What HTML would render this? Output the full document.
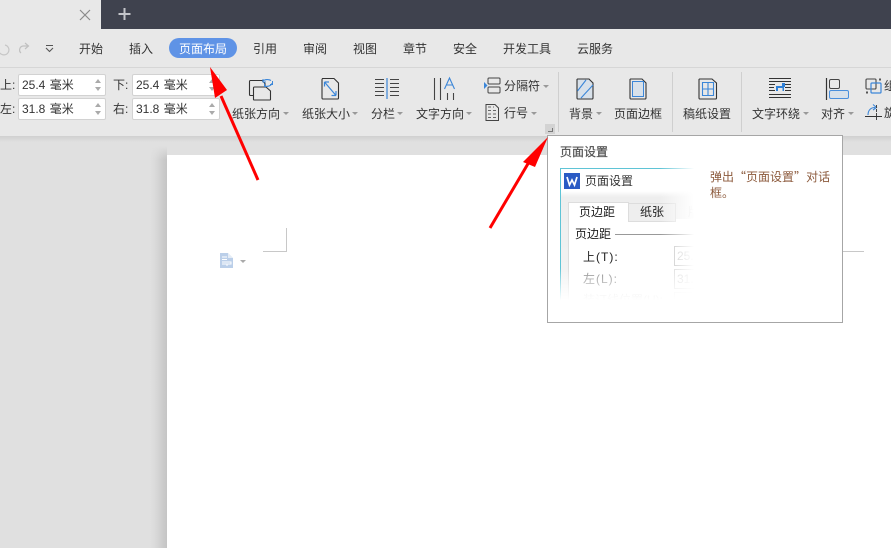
<!DOCTYPE html>
<html lang="zh"><head><meta charset="utf-8"><title>页面布局</title>
<style>
html,body{margin:0;padding:0;width:891px;height:553px;overflow:hidden;background:#fff}
body{position:relative;font:12px/16px "Liberation Sans","Noto Sans CJK SC",sans-serif;color:#333}
.a{position:absolute}
.t{position:absolute;white-space:nowrap}
.tab{top:41px;line-height:16px;transform:translateX(-50%)}
.lbl{top:106px;transform:translateX(-50%)}
.inp{position:absolute;height:20px;background:#fff;border:1px solid #d2d2d2;border-radius:2px;line-height:20px;padding-left:3px;width:83px;color:#333;word-spacing:1px}
.inp:before,.inp:after{content:"";position:absolute;right:4px;border-left:3px solid transparent;border-right:3px solid transparent}
.inp:before{top:4px;border-bottom:4px solid #aaa}
.inp:after{bottom:4px;border-top:4px solid #aaa}
.car{position:absolute;width:0;height:0;border-left:3px solid transparent;border-right:3px solid transparent;border-top:3px solid #999}
.sep{position:absolute;top:72px;width:1px;height:60px;background:#cfcfcf}
svg{position:absolute;overflow:visible}
</style></head><body>
<!-- backgrounds -->
<div class="a" style="left:0;top:0;width:101px;height:29px;background:#e8e8e8"></div>
<div class="a" style="left:101px;top:0;width:790px;height:29px;background:#3f424e"></div>
<div class="a" style="left:0;top:29px;width:891px;height:38px;background:#e8e8e8;border-bottom:1px solid #d6d6d6"></div>
<div class="a" style="left:0;top:68px;width:891px;height:68px;background:#e8e8e8"></div>
<div class="a" style="left:0;top:136px;width:891px;height:412px;background:linear-gradient(#d0d0d0,#e0e0e0 6px)"></div>
<div class="a" style="left:150px;top:146px;width:17px;height:402px;background:linear-gradient(90deg,#e0e0e0,#dadada 30%,#c4c4c4)"></div>
<div class="a" style="left:150px;top:146px;width:17px;height:14px;background:linear-gradient(#e0e0e0,rgba(224,224,224,0))"></div>
<div class="a" style="left:167px;top:155px;width:724px;height:393px;background:#fff"></div>

<!-- tab bar -->
<svg style="left:79px;top:9px" width="12" height="12"><path d="M1 1L11 11M11 1L1 11" stroke="#8a8a8a" stroke-width="1.2" fill="none"/></svg>
<svg style="left:118px;top:8px" width="13" height="13"><path d="M6.500 0V12M0.500 6H12.500" stroke="#c4c5ca" stroke-width="2" fill="none"/></svg>

<!-- qat -->
<svg style="left:-6px;top:42px" width="70" height="14"><path d="M11 3A5 5 0 1 1 6 11" stroke="#c6c6c6" stroke-width="1.200" fill="none"/><path d="M34 4H29A4 4 0 0 0 27 11M31 1L34.500 4L31 7" stroke="#c0c0c0" stroke-width="1.200" fill="none"/><path d="M52 3.500H59M52 6L55.500 9.500L59 6" stroke="#555" stroke-width="1.100" fill="none"/></svg>

<!-- menu -->
<div class="a" style="left:169px;top:38px;width:68px;height:20px;border-radius:10px;background:#5f93e6"></div>
<span class="t tab" style="left:91px">开始</span>
<span class="t tab" style="left:141px">插入</span>
<span class="t tab" style="left:203px;color:#fff">页面布局</span>
<span class="t tab" style="left:265px">引用</span>
<span class="t tab" style="left:315px">审阅</span>
<span class="t tab" style="left:365px">视图</span>
<span class="t tab" style="left:415px">章节</span>
<span class="t tab" style="left:465px">安全</span>
<span class="t tab" style="left:527px">开发工具</span>
<span class="t tab" style="left:595px">云服务</span>

<!-- margins -->
<span class="t" style="left:0;top:77px">上:</span>
<span class="t" style="left:0;top:101px">左:</span>
<span class="t" style="left:113px;top:77px">下:</span>
<span class="t" style="left:113px;top:101px">右:</span>
<div class="inp" style="left:18px;top:74px">25.4 毫米</div>
<div class="inp" style="left:18px;top:98px">31.8 毫米</div>
<div class="inp" style="left:132px;top:74px">25.4 毫米</div>
<div class="inp" style="left:132px;top:98px">31.8 毫米</div>

<!-- ribbon icons -->
<svg style="left:249px;top:78px" width="25" height="23"><path d="M4 17.500H1.500A1 1 0 0 1 .5 16.500V3.500A1 1 0 0 1 1.500 2.500H13L16 5.500V9" stroke="#333" stroke-width="1.100" fill="none"/><path d="M4.500 21.500V10A1 1 0 0 1 5.500 9H17L21.500 13V21.500A.5 .5 0 0 1 21 22H5A.5 .5 0 0 1 4.500 21.500Z" stroke="#333" stroke-width="1.100" fill="#e8e8e8"/><path d="M14 3A5 3 0 0 1 22 2.500M23 5A5 3.500 0 0 1 16 8" stroke="#3b86d8" stroke-width="1.100" fill="none"/><path d="M14 1V4H17M23.500 3V6.500M21 6.500H24M15.500 5.500V8.500H18.500" stroke="#3b86d8" stroke-width="1" fill="none"/></svg>
<svg style="left:321px;top:78px" width="18" height="22"><path d="M1.500 .5H13L17.500 5V20A1 1 0 0 1 16.500 21H2A1 1 0 0 1 1 20V1.500Z" stroke="#333" stroke-width="1.100" fill="none"/><path d="M3.500 4L15 17.500M3.500 4V8.500M3.500 4H8M15 17.500V13M15 17.500H10.500" stroke="#3b86d8" stroke-width="1.200" fill="none"/></svg>
<svg style="left:375px;top:78px" width="24" height="22"><path d="M0 1.500H9M0 5.500H9M0 9.500H9M0 13.500H9M0 17.500H9M15 1.500H24M15 5.500H24M15 9.500H24M15 13.500H24M15 17.500H24" stroke="#444" stroke-width="1"/><path d="M12 0V21" stroke="#3b86d8" stroke-width="1.200"/></svg>
<svg style="left:433px;top:77px" width="24" height="24"><path d="M1.500 1V23M7.500 1V23M14.500 16V23M20.500 16V23" stroke="#444" stroke-width="1.100" fill="none"/><path d="M11.500 12L16.500 1L21.500 12M13.500 8H19.500" stroke="#3b86d8" stroke-width="1.100" fill="none"/></svg>
<svg style="left:484px;top:77px" width="17" height="17"><path d="M5 1H15A1 1 0 0 1 16 2V6A1 1 0 0 1 15 7H5A1 1 0 0 1 4 6V2A1 1 0 0 1 5 1ZM5 10H15A1 1 0 0 1 16 11V15A1 1 0 0 1 15 16H5A1 1 0 0 1 4 15V11A1 1 0 0 1 5 10Z" stroke="#444" stroke-width="1" fill="none"/><path d="M0 5L3.500 8.500L0 12Z" fill="#3b86d8"/></svg>
<svg style="left:485px;top:104px" width="14" height="17"><path d="M1 .5H10L13.500 4V16.500H1Z" stroke="#444" stroke-width="1" fill="none"/><path d="M3 3H6M3 6.500H6M3 10H6M3 13.500H6M8 3H9M8 6.500H11M8 10H11M8 13.500H11" stroke="#666" stroke-width="1"/></svg>
<svg style="left:576px;top:78px" width="18" height="22"><path d="M1.500 1H13L17 5V20A1 1 0 0 1 16 21H2A1 1 0 0 1 1 20V1.500Z" stroke="#333" stroke-width="1.100" fill="#d8e1ea"/><path d="M1.500 13L10 2M5 20L17 7" stroke="#3b86d8" stroke-width="1.100" fill="none"/></svg>
<svg style="left:629px;top:78px" width="18" height="22"><path d="M1.500 1H13L17 5V20A1 1 0 0 1 16 21H2A1 1 0 0 1 1 20V1.500Z" stroke="#333" stroke-width="1.100" fill="none"/><rect x="3.500" y="3.500" width="11" height="15" fill="#d8e1ea" stroke="#3b86d8" stroke-width="1"/></svg>
<svg style="left:698px;top:78px" width="20" height="22"><path d="M1.500 1H14L18.500 5V20A1 1 0 0 1 17.500 21H2A1 1 0 0 1 1 20V1.500Z" stroke="#333" stroke-width="1.100" fill="none"/><path d="M4.500 4.500H15.500V17.500H4.500ZM4.500 11H15.500M10 4.500V17.500" stroke="#3b86d8" stroke-width="1.100" fill="none"/></svg>
<svg style="left:769px;top:78px" width="23" height="20"><path d="M0 .5H22M0 3.500H22M0 16.500H22M0 19.500H22M0 6.500H6M0 9.500H5M0 12.500H6M16 6.500H22M16 9.500H22M16 12.500H22" stroke="#333" stroke-width="1"/><path d="M7 13V8H13V5H16V9H15V13H13.500V10H9V13Z" fill="#2e7fd6"/></svg>
<svg style="left:826px;top:78px" width="23" height="24"><path d="M.5 0V22" stroke="#333" stroke-width="1.200"/><rect x="3.500" y="1.500" width="10" height="9" rx="1.500" fill="none" stroke="#444" stroke-width="1"/><rect x="3.500" y="12.500" width="19" height="8" rx="1.500" fill="#d8e1ea" stroke="#4a8fdc" stroke-width="1"/></svg>
<svg style="left:865px;top:78px" width="17" height="17"><rect x="1" y="1" width="10" height="10" rx="1" fill="none" stroke="#444" stroke-width="1.100"/><rect x="6" y="5" width="10" height="10" rx="1" fill="none" stroke="#3b86d8" stroke-width="1.200"/><path d="M14 .5H16V2.500H14ZM1 13.500H3V15.500H1Z" fill="#555"/></svg>
<svg style="left:865px;top:104px" width="17" height="17"><path d="M3 11C3 6 6 3.500 10 3.500M8 .5L11.500 3.500L8 6" stroke="#3b86d8" stroke-width="1.100" fill="none"/><path d="M11.500 1V17" stroke="#444" stroke-width="1" stroke-dasharray="3 1" fill="none"/><path d="M0 12.500H17" stroke="#333" stroke-width="1"/></svg>

<!-- ribbon labels -->
<span class="t lbl" style="left:256px">纸张方向</span><div class="car" style="left:283px;top:112px"></div>
<span class="t lbl" style="left:326px">纸张大小</span><div class="car" style="left:352px;top:112px"></div>
<span class="t lbl" style="left:383px">分栏</span><div class="car" style="left:397px;top:112px"></div>
<span class="t lbl" style="left:440px">文字方向</span><div class="car" style="left:466px;top:112px"></div>
<span class="t" style="left:504px;top:78px">分隔符</span><div class="car" style="left:543px;top:85px"></div>
<span class="t" style="left:504px;top:105px">行号</span><div class="car" style="left:531px;top:112px"></div>
<span class="t lbl" style="left:581px">背景</span><div class="car" style="left:596px;top:112px"></div>
<span class="t lbl" style="left:638px">页面边框</span>
<span class="t lbl" style="left:707px">稿纸设置</span>
<span class="t lbl" style="left:776px">文字环绕</span><div class="car" style="left:803px;top:112px"></div>
<span class="t lbl" style="left:833px">对齐</span><div class="car" style="left:848px;top:112px"></div>
<span class="t" style="left:884px;top:78px">组</span>
<span class="t" style="left:884px;top:105px">旋</span>

<div class="sep" style="left:558px"></div>
<div class="sep" style="left:672px"></div>
<div class="sep" style="left:741px"></div>
<div class="a" style="left:545px;top:124px;width:10px;height:10px;background:#d3d3d3"></div>
<svg style="left:545px;top:124px" width="10" height="10"><path d="M3 7.500H7.500V4" stroke="#777" stroke-width="1" fill="none"/></svg>

<!-- page marks -->
<div class="a" style="left:263px;top:251px;width:24px;height:1px;background:#c8c8c8"></div>
<div class="a" style="left:286px;top:228px;width:1px;height:24px;background:#c8c8c8"></div>
<div class="a" style="left:843px;top:251px;width:21px;height:1px;background:#c8c8c8"></div>
<svg style="left:220px;top:253px" width="13" height="15"><path d="M0 0H8L13 5V15H0Z" fill="#bbcfe9"/><path d="M2 4H7M2 6.500H7M2 9H11V11H2M7 11V13" stroke="#fff" stroke-width="1" fill="none"/><path d="M8 0V5H13" fill="#fff" opacity=".6"/></svg>
<div class="car" style="left:240px;top:260px;border-top-color:#aaa"></div>

<!-- tooltip -->
<div class="a" style="left:547px;top:135px;width:294px;height:186px;background:#fff;border:1px solid #a6a6a6"></div>
<span class="t" style="left:560px;top:144px;color:#555;-webkit-text-stroke:.25px #555">页面设置</span>
<div class="a" style="left:560px;top:168px;width:140px;height:145px;overflow:hidden">
  <div class="a" style="left:0;top:0;width:140px;height:145px;border:1px solid #5fc4d6;border-right:0;border-bottom:0;box-sizing:border-box;background:linear-gradient(#fff 22px,#eee 28px,#f4f4f4)"></div>
  <svg style="left:4px;top:5px" width="16" height="16"><rect width="16" height="16" fill="#2b5bc4"/><path d="M3 4L5.500 12L8 7L10.500 12L13 4" stroke="#fff" stroke-width="1.700" fill="none"/></svg>
  <span class="t" style="left:25px;top:5px;color:#333">页面设置</span>
  <div class="a" style="left:8px;top:51px;width:132px;height:94px;background:#fff;border-left:1px solid #ddd"></div>
  <div class="a" style="left:8px;top:34px;width:61px;height:20px;background:#fff;border:1px solid #ddd;border-bottom:0;box-sizing:border-box"></div>
  <div class="a" style="left:68px;top:35px;width:48px;height:19px;background:#eee;border:1px solid #ddd;box-sizing:border-box"></div>
  <span class="t" style="left:19px;top:36px;color:#222">页边距</span>
  <span class="t" style="left:80px;top:36px;color:#222">纸张</span>
  <span class="t" style="left:128px;top:36px;color:#bbb">版</span>
  <span class="t" style="left:15px;top:58px;color:#222">页边距</span>
  <div class="a" style="left:55px;top:66px;width:85px;height:1px;background:#999"></div>
  <span class="t" style="left:23px;top:81px;color:#222;letter-spacing:1px">上(T):</span>
  <span class="t" style="left:23px;top:103px;color:#888;letter-spacing:1px">左(L):</span>
  <span class="t" style="left:23px;top:124px;color:#ccc">装订线位置(U):</span>
  <div class="a" style="left:114px;top:78px;width:40px;height:18px;border:1px solid #bbb"></div>
  <div class="a" style="left:114px;top:101px;width:40px;height:18px;border:1px solid #ccc"></div>
  <div class="a" style="left:114px;top:124px;width:40px;height:18px;border:1px solid #e4e4e4"></div>
  <span class="t" style="left:117px;top:80px;color:#bbb">25.4</span>
  <span class="t" style="left:117px;top:103px;color:#bbb">31.8</span>
  <div class="a" style="left:100px;top:0;width:40px;height:145px;background:linear-gradient(90deg,rgba(255,255,255,0),#fff 85%)"></div>
  <div class="a" style="left:0;top:100px;width:140px;height:45px;background:linear-gradient(rgba(255,255,255,0),rgba(255,255,255,.85) 60%,#fff 72%)"></div>
</div>
<div class="a" style="left:710px;top:169px;width:124px;line-height:16px;color:#8c5a3c">弹出<span style="font-family:'Noto Sans CJK SC',sans-serif">“</span>页面设置<span style="font-family:'Noto Sans CJK SC',sans-serif">”</span>对话框。</div>

<!-- red arrows -->
<svg style="left:0;top:0" width="891" height="553"><path d="M258 180L221 96" stroke="#f00" stroke-width="3" fill="none"/><path d="M210 67L227 90L215 98Z" fill="#f00"/><path d="M490 228L529 162" stroke="#f00" stroke-width="3" fill="none"/><path d="M548 137L535 167L523 162Z" fill="#f00"/></svg>
</body></html>
